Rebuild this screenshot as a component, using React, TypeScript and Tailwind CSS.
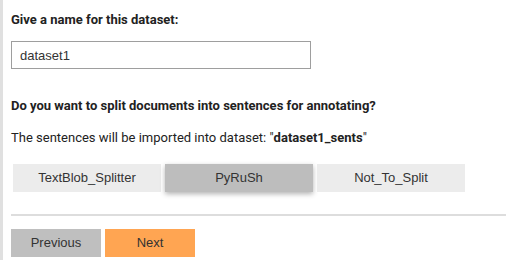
export default function App() {
  return (
    <div className="w-[506px] h-[260px] bg-white border-l-[3px] border-[#e0e0e0] pl-[8px] overflow-hidden">
      <div className="pt-[10px] text-[13px] leading-[20px] font-bold text-[#222] font-['Roboto',sans-serif]">
        Give a name for this dataset:
      </div>
      <input
        className="mt-[11px] block w-[300px] h-[28px] border border-[#9e9e9e] px-[8px] text-[13px] text-[#333] font-['Liberation_Sans',Arial,sans-serif] outline-none"
        defaultValue="dataset1"
      />
      <div className="mt-[27px] text-[13px] leading-[20px] font-bold text-[#222] font-['Roboto',sans-serif]">
        Do you want to split documents into sentences for annotating?
      </div>
      <div className="mt-[12px] text-[13px] leading-[20px] text-[#222] font-['Roboto',sans-serif]">
        The sentences will be imported into dataset: "<b>dataset1_sents</b>"
      </div>
      <div className="mt-[16px] ml-[2px] flex gap-[4px] font-['Liberation_Sans',Arial,sans-serif] text-[13px] text-[#333]">
        <button className="w-[148px] h-[28px] bg-[#ececec]">TextBlob_Splitter</button>
        <button className="w-[148px] h-[28px] bg-[#bdbdbd] shadow-[0_2px_5px_rgba(0,0,0,0.3)]">PyRuSh</button>
        <button className="w-[148px] h-[28px] bg-[#ececec]">Not_To_Split</button>
      </div>
      <div className="mt-[22px] h-[2px] bg-[#dddddd]" />
      <div className="mt-[13px] flex gap-[4px] font-['Liberation_Sans',Arial,sans-serif] text-[13px] text-[#333]">
        <button className="w-[90px] h-[28px] bg-[#bfbfbf]">Previous</button>
        <button className="w-[90px] h-[28px] bg-[#ffa552]">Next</button>
      </div>
    </div>
  );
}
